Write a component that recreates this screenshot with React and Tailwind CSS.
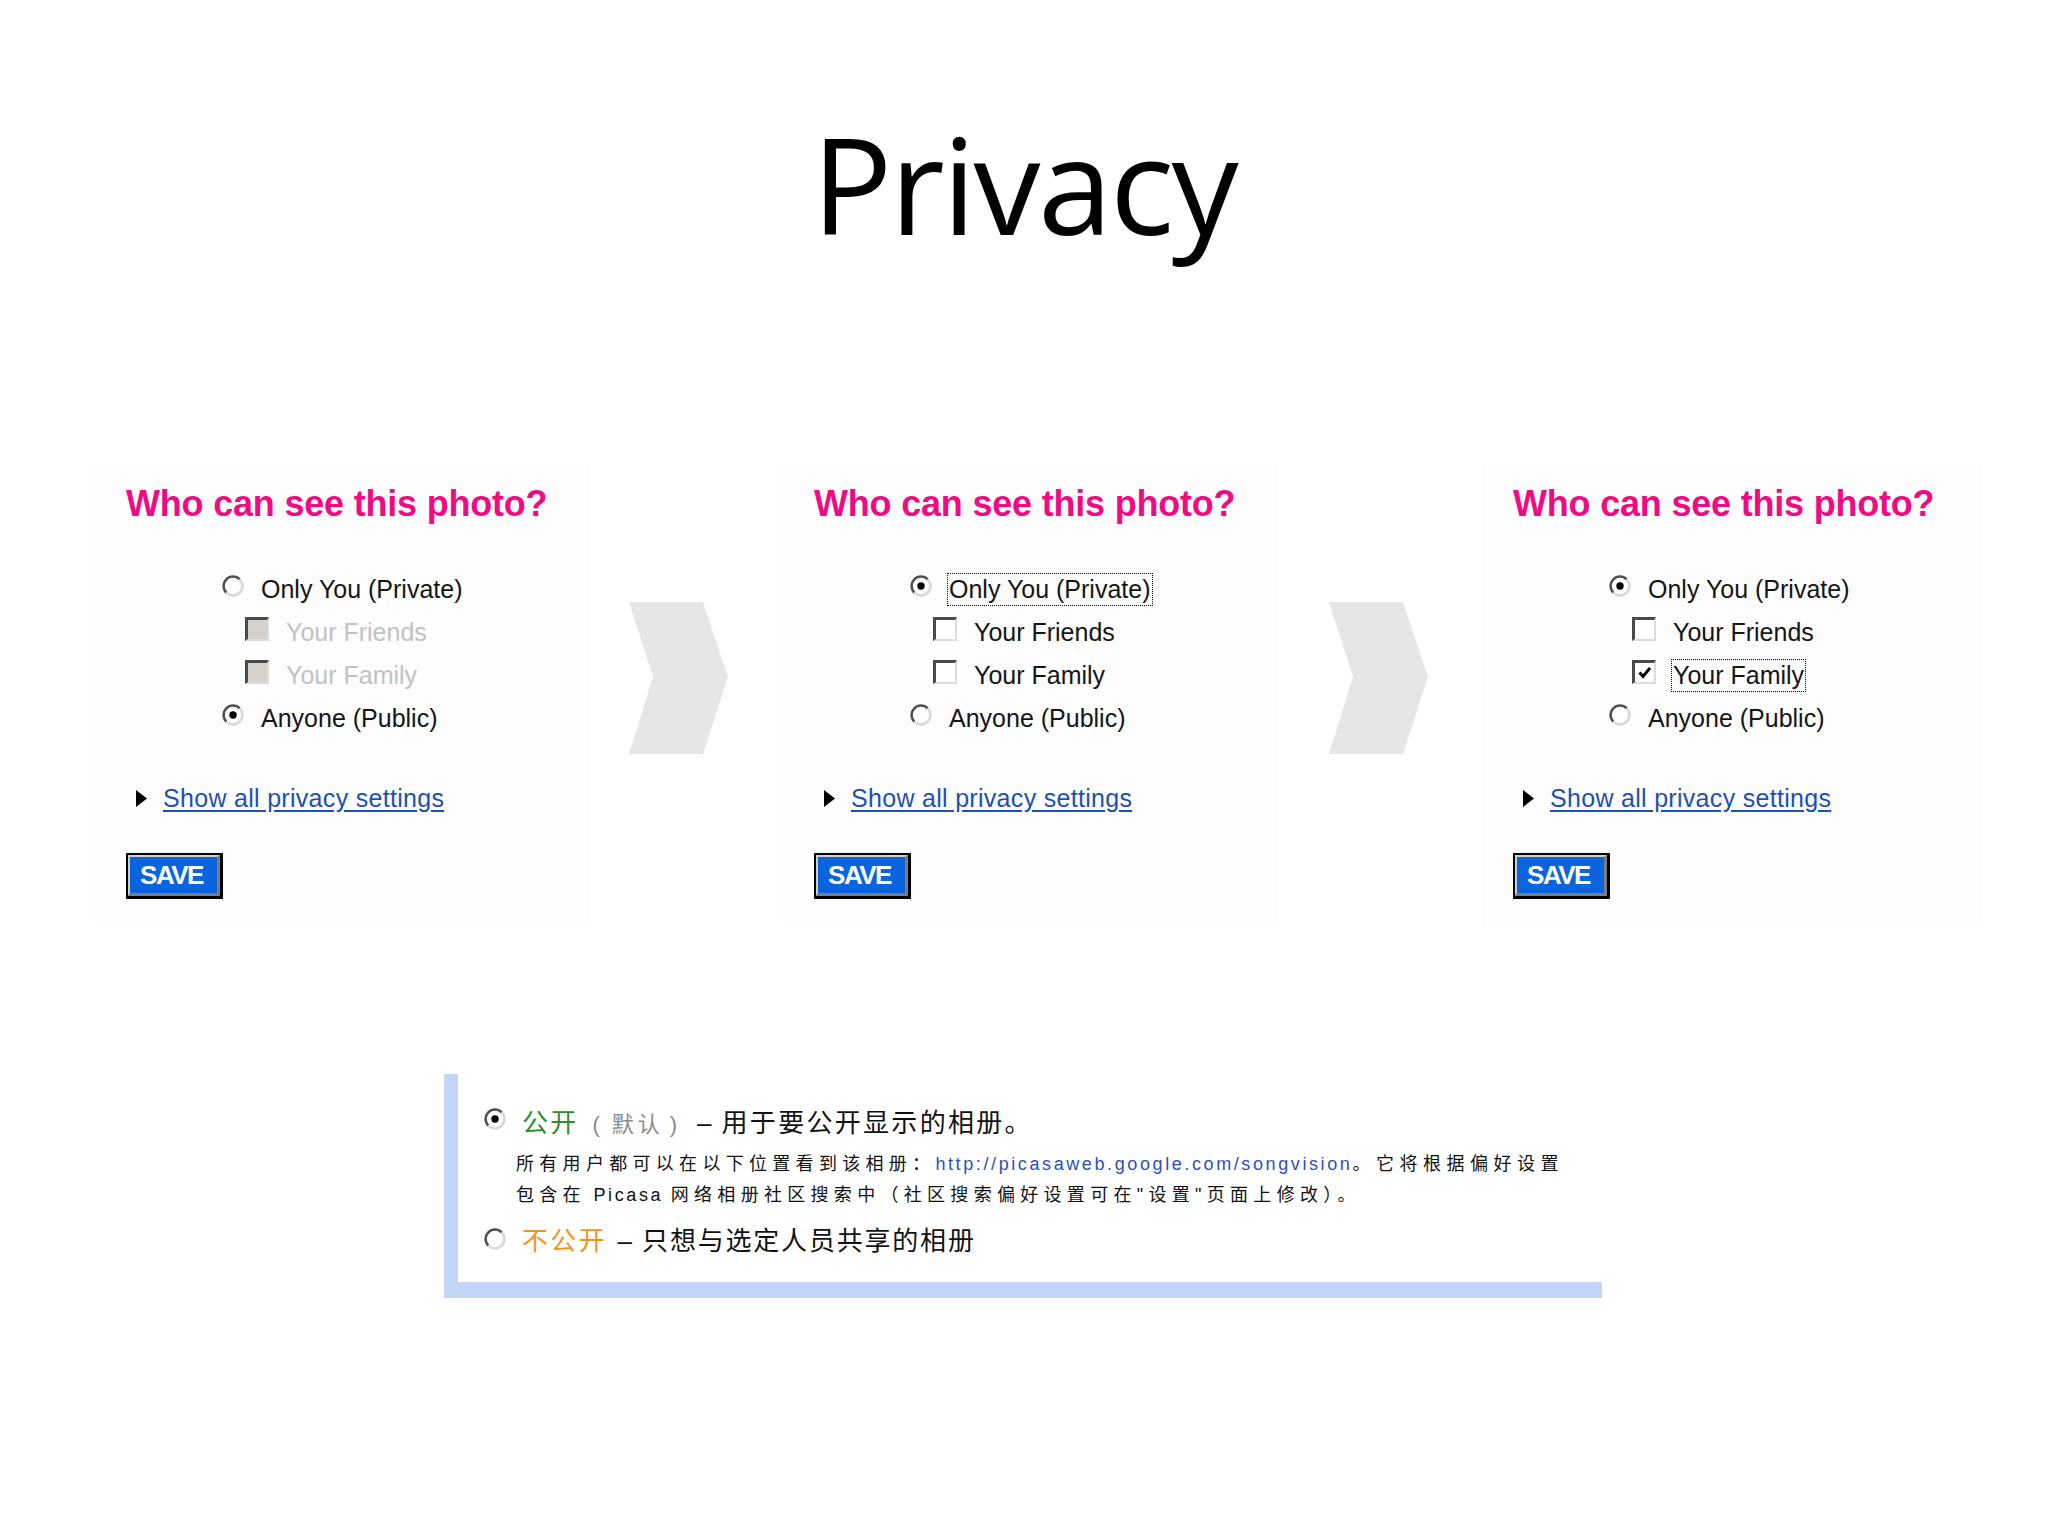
import React from "react";

const panels = [
    { priv: false, friends: false, family: false, disabled: true, focus: null, w: "w-[496px]", ml: "" },
    { priv: true, friends: false, family: false, disabled: false, focus: "private", w: "w-[496px]", ml: "ml-[54px]" },
    { priv: true, friends: false, family: true, disabled: false, focus: "family", w: "w-[501px]", ml: "ml-[53px]" },
];

function Radio({ checked, className = "" }) {
    return (
        <svg width="22" height="22" viewBox="0 0 22 22" className={`shrink-0 ${className}`}>
            <circle cx="11" cy="11" r="9" fill="#fff" />
            <path d="M4.35 17.65A9.4 9.4 0 0 1 17.65 4.35" stroke="#505050" strokeWidth="2.5" fill="none" />
            <path d="M17.65 4.35A9.4 9.4 0 0 1 4.35 17.65" stroke="#d8d8d8" strokeWidth="2.5" fill="none" />
            {checked && <circle cx="11" cy="11" r="3.7" fill="#000" />}
        </svg>
    );
}

function Checkbox({ checked, disabled }) {
    return (
        <div className={`mt-[6px] w-[24px] h-[24px] shrink-0 flex items-center justify-center border-t-[3px] border-l-[3px] border-r-2 border-b-2 border-t-[#4a4a4a] border-l-[#4a4a4a] border-r-[#dcdcdc] border-b-[#dcdcdc] ${disabled ? "bg-[#d4d1cc]" : "bg-white"}`}>
            {checked && (
                <svg width="16" height="16" viewBox="0 0 16 16">
                    <path d="M2.5 7.5 L6 11.5 L13 3" stroke="#000" strokeWidth="3" fill="none" />
                </svg>
            )}
        </div>
    );
}

function Label({ children, focused, muted }) {
    return (
        <span className={`ml-[17px] mt-[7px] inline-block leading-[29px] whitespace-nowrap ${muted ? "text-[#c2c2c2]" : "text-[#151515]"} ${focused ? "outline-1 outline-dotted outline-black outline-offset-[1px]" : ""}`}>
            {children}
        </span>
    );
}

function Chevron({ className = "" }) {
    return (
        <svg width="100" height="152" viewBox="0 0 100 152" className={`shrink-0 ${className}`}>
            <polygon points="0,0 74,0 99,75 74,152 0,152 24,75" fill="#e6e5e8" />
        </svg>
    );
}

function Panel({ p }) {
    return (
        <div className={`${p.w} ${p.ml} shrink-0 bg-[#fdfdfd] pt-[23px] pb-[28px]`}>
            <h2 className="pl-[31px] text-[36px] leading-none font-bold tracking-[-0.2px] text-[#ee0b84] whitespace-nowrap">
                Who can see this photo?
            </h2>

            <div className="mt-[46px] pl-[127px] text-[25px]">
                <div className="flex items-start h-[43px]">
                    <Radio checked={p.priv} className="mt-[7px]" />
                    <Label focused={p.focus === "private"}>Only You (Private)</Label>
                </div>
                <div className="pl-[23px]">
                    <div className="flex items-start h-[43px]">
                        <Checkbox checked={p.friends} disabled={p.disabled} />
                        <Label muted={p.disabled}>Your Friends</Label>
                    </div>
                    <div className="flex items-start h-[43px]">
                        <Checkbox checked={p.family} disabled={p.disabled} />
                        <Label muted={p.disabled} focused={p.focus === "family"}>Your Family</Label>
                    </div>
                </div>
                <div className="flex items-start h-[43px]">
                    <Radio checked={!p.priv} className="mt-[7px]" />
                    <Label>Anyone (Public)</Label>
                </div>
            </div>

            {/* expander link */}
            <div className="mt-[37px] pl-[41px] flex items-start h-[43px] text-[25px]">
                <svg width="11" height="17" viewBox="0 0 11 17" className="mt-[13px] shrink-0">
                    <polygon points="0,0 11,8.5 0,17" fill="#000" />
                </svg>
                <a href="#" className="ml-[16px] mt-[7px] leading-[29px] tracking-[0.3px] whitespace-nowrap text-[#1d50b4] underline underline-offset-[3px]">
                    Show all privacy settings
                </a>
            </div>

            <button type="button" className="mt-[33px] ml-[31px] block w-[97px] h-[46px] p-0 border-t-2 border-l-2 border-r-[3px] border-b-[3px] border-black">
                <div className="w-full h-full flex items-center justify-center pr-[4px] bg-[#0a64e0] border-t-2 border-l-2 border-r-[3px] border-b-[3px] border-t-[#cfcfcf] border-l-[#cfcfcf] border-r-[#7c7c7c] border-b-[#7c7c7c]">
                    <span className="text-white font-bold text-[26px] leading-none tracking-[-1.5px]">SAVE</span>
                </div>
            </button>
        </div>
    );
}

export default function App() {
    return (
        <div className="w-[2048px] h-[1536px] bg-white overflow-hidden text-[#111] [font-family:'Liberation_Sans','Noto_Sans_CJK_SC',Arial,sans-serif]">
            <h1 className="pt-[116px] text-center text-[134px] leading-none tracking-[-2.5px] text-black [font-family:'Open_Sans',sans-serif]">
                Privacy
            </h1>

            <div className="mt-[213px] pl-[95px] flex items-start">
                <Panel p={panels[0]} />
                <Chevron className="ml-[38px] mt-[139px]" />
                <Panel p={panels[1]} />
                <Chevron className="ml-[50px] mt-[139px]" />
                <Panel p={panels[2]} />
            </div>

            {/* Chinese album visibility box */}
            <div className="mt-[147px] ml-[444px] w-[1158px] border-l-[14px] border-b-[16px] border-[#c3d6f8] bg-white pt-[31px] pl-[26px] pb-[23px]">
                <div className="flex items-start h-[36px]">
                    <Radio checked className="mt-[3px]" />
                    <div className="ml-[16px] leading-[36px] whitespace-nowrap">
                        <span className="text-[26px] tracking-[2.2px] text-[#2e8b2e]">公开</span>
                        <span className="ml-[14px] text-[22px] text-[#8a8a8a]">
                            (<span className="ml-[12px] mr-[6px] tracking-[4px]">默认</span>)
                        </span>
                        <span className="ml-[20px] mr-[10px] text-[26px]">–</span>
                        <span className="text-[26px] tracking-[2.3px]">用于要公开显示的相册。</span>
                    </div>
                </div>

                <div className="mt-[8px] ml-[32px] leading-[30px] whitespace-nowrap">
                    <div>
                        <span className="text-[18px] tracking-[5.3px]">所有用户都可以在以下位置看到该相册：</span>
                        <a href="#" className="text-[18px] tracking-[2.6px] text-[#2a4fc0]">http://picasaweb.google.com/songvision</a>
                        <span className="text-[18px] tracking-[5.5px]">。它将根据偏好设置</span>
                    </div>
                    <div>
                        <span className="text-[18px] tracking-[5.3px]">包含在</span>
                        <span className="text-[18px] tracking-[2.6px]"> Picasa </span>
                        <span className="text-[18px] tracking-[5.3px]">网络相册社区搜索中（社区搜索偏好设置可在"设置"页面上修改）。</span>
                    </div>
                </div>

                <div className="mt-[12px] flex items-start h-[36px]">
                    <Radio className="mt-[5px]" />
                    <div className="ml-[16px] leading-[36px] whitespace-nowrap">
                        <span className="text-[26px] tracking-[2.2px] text-[#f39418]">不公开</span>
                        <span className="ml-[11px] mr-[10px] text-[26px]">–</span>
                        <span className="text-[26px] tracking-[1.8px]">只想与选定人员共享的相册</span>
                    </div>
                </div>
            </div>
        </div>
    );
}
